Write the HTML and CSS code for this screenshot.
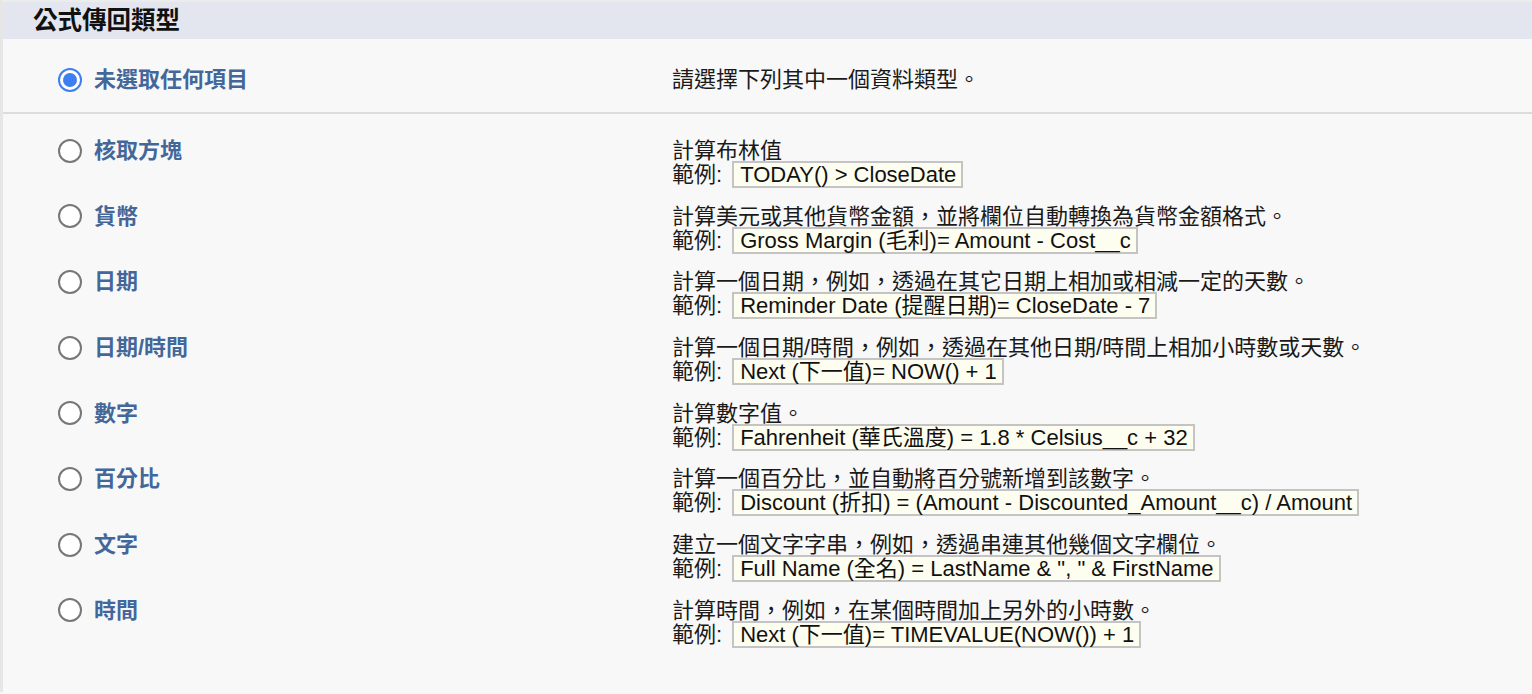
FILE: index.html
```html
<!DOCTYPE html>
<html lang="zh-Hant">
<head>
<meta charset="utf-8">
<title>公式傳回類型</title>
<link rel="stylesheet" href="styles.css">
</head>
<body>
<div class="panel">
  <div class="panel-head"><h2>公式傳回類型</h2></div>
  <div class="row row-none">
    <label class="opt"><span class="radio checked"></span><span class="lbl">未選取任何項目</span></label>
    <div class="desc"><div class="line">請選擇下列其中一個資料類型。</div></div>
  </div>
  <div class="list">
    <div class="row">
      <label class="opt"><span class="radio"></span><span class="lbl">核取方塊</span></label>
      <div class="desc"><div class="line">計算布林值</div><div class="ex">範例: <span class="code">TODAY() &gt; CloseDate</span></div></div>
    </div>
    <div class="row">
      <label class="opt"><span class="radio"></span><span class="lbl">貨幣</span></label>
      <div class="desc"><div class="line">計算美元或其他貨幣金額，並將欄位自動轉換為貨幣金額格式。</div><div class="ex">範例: <span class="code">Gross Margin (毛利)= Amount - Cost__c</span></div></div>
    </div>
    <div class="row">
      <label class="opt"><span class="radio"></span><span class="lbl">日期</span></label>
      <div class="desc"><div class="line">計算一個日期，例如，透過在其它日期上相加或相減一定的天數。</div><div class="ex">範例: <span class="code">Reminder Date (提醒日期)= CloseDate - 7</span></div></div>
    </div>
    <div class="row">
      <label class="opt"><span class="radio"></span><span class="lbl">日期/時間</span></label>
      <div class="desc"><div class="line">計算一個日期/時間，例如，透過在其他日期/時間上相加小時數或天數。</div><div class="ex">範例: <span class="code">Next (下一值)= NOW() + 1</span></div></div>
    </div>
    <div class="row">
      <label class="opt"><span class="radio"></span><span class="lbl">數字</span></label>
      <div class="desc"><div class="line">計算數字值。</div><div class="ex">範例: <span class="code">Fahrenheit (華氏溫度) = 1.8 * Celsius__c + 32</span></div></div>
    </div>
    <div class="row">
      <label class="opt"><span class="radio"></span><span class="lbl">百分比</span></label>
      <div class="desc"><div class="line">計算一個百分比，並自動將百分號新增到該數字。</div><div class="ex">範例: <span class="code">Discount (折扣) = (Amount - Discounted_Amount__c) / Amount</span></div></div>
    </div>
    <div class="row">
      <label class="opt"><span class="radio"></span><span class="lbl">文字</span></label>
      <div class="desc"><div class="line">建立一個文字字串，例如，透過串連其他幾個文字欄位。</div><div class="ex">範例: <span class="code">Full Name (全名) = LastName &amp; ", " &amp; FirstName</span></div></div>
    </div>
    <div class="row">
      <label class="opt"><span class="radio"></span><span class="lbl">時間</span></label>
      <div class="desc"><div class="line">計算時間，例如，在某個時間加上另外的小時數。</div><div class="ex">範例: <span class="code">Next (下一值)= TIMEVALUE(NOW()) + 1</span></div></div>
    </div>
  </div>
</div>
</body>
</html>
```
FILE: styles.css
```css
html, body {
  margin: 0;
  padding: 0;
  background: #f8f8f8;
}
body {
  font-family: "Liberation Sans", "Noto Sans CJK TC", sans-serif;
  font-size: 22px;
  color: #1a1a1a;
  height: 694px;
  overflow: hidden;
}
.panel {
  border-left: 3px solid #e6e6e6;
  border-top: 2px solid #ececec;
  height: 692px;
  box-sizing: border-box;
}
.panel-head {
  background: #e3e6ef;
  height: 37px;
  display: flex;
  align-items: center;
  padding-left: 30px;
}
.panel-head h2 {
  margin: 0;
  font-size: 24.5px;
  font-weight: bold;
  color: #111;
  line-height: 28px;
}
.row {
  display: grid;
  grid-template-columns: 669px 1fr;
  align-items: start;
}
.row-none {
  padding: 28px 0 20px;
  border-bottom: 2px solid #dcdcdc;
}
.list {
  padding-top: 24px;
}
.list .row {
  height: 65.7px;
}
.opt {
  display: flex;
  align-items: center;
  height: 25px;
  padding-left: 55px;
  gap: 12px;
}
.radio {
  width: 24px;
  height: 24px;
  box-sizing: border-box;
  border: 2px solid #777;
  border-radius: 50%;
  background: #fff;
  flex: none;
  position: relative;
}
.radio.checked {
  border-color: #3d7ef0;
}
.radio.checked::after {
  content: "";
  position: absolute;
  left: 3px;
  top: 3px;
  width: 14px;
  height: 14px;
  border-radius: 50%;
  background: #3d7ef0;
}
.lbl {
  font-weight: bold;
  color: #44679a;
  line-height: 25px;
}
.line {
  line-height: 25px;
  height: 25px;
  white-space: nowrap;
}
.ex {
  display: flex;
  align-items: center;
  height: 27px;
  margin-top: -2px;
  white-space: nowrap;
  line-height: 23px;
}
.code {
  display: inline-block;
  margin-left: 10px;
  padding: 0 5px 0 6px;
  background: #fefef0;
  border: 2px solid #c4c4c4;
  line-height: 23px;
  color: #111;
}
```
